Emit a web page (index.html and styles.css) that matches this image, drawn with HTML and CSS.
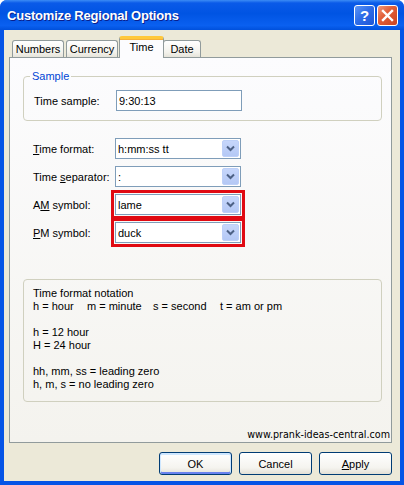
FILE: index.html
```html
<!DOCTYPE html>
<html lang="en">
<head>
    <meta charset="UTF-8">
    <meta name="viewport" content="width=device-width, initial-scale=1.0">
    <title>Customize Regional Options</title>
    <link rel="stylesheet" href="styles.css">
</head>
<body>
    <div class="window">
        <div class="titlebar">
            <span class="title">Customize Regional Options</span>
            <div class="caption-buttons">
                <button class="caption-btn help">?</button>
                <button class="caption-btn close">
                    <svg width="13" height="13" viewBox="0 0 13 13">
                        <path d="M2 2 L11 11 M11 2 L2 11" stroke="#fff" stroke-width="2.4" stroke-linecap="square"/>
                    </svg>
                </button>
            </div>
        </div>

        <div class="client">
            <div class="tabs">
                <div class="tab tab-numbers">Numbers</div>
                <div class="tab tab-currency">Currency</div>
                <div class="tab tab-time active">Time</div>
                <div class="tab tab-date">Date</div>
            </div>

            <div class="panel">
                <fieldset class="group sample">
                    <legend>Sample</legend>
                    <div class="field">
                        <label>Time sample:</label>
                        <div class="textbox">9:30:13</div>
                    </div>
                </fieldset>

                <div class="fields">
                    <div class="field">
                        <label><u>T</u>ime format:</label>
                        <div class="combo">
                            <span class="combo-value">h:mm:ss tt</span>
                            <span class="drop"><svg width="9" height="7" viewBox="0 0 9 7"><path d="M1 1.5 L4.5 5 L8 1.5" fill="none" stroke="#4d6185" stroke-width="2"/></svg></span>
                        </div>
                    </div>
                    <div class="field">
                        <label>Time <u>s</u>eparator:</label>
                        <div class="combo">
                            <span class="combo-value">:</span>
                            <span class="drop"><svg width="9" height="7" viewBox="0 0 9 7"><path d="M1 1.5 L4.5 5 L8 1.5" fill="none" stroke="#4d6185" stroke-width="2"/></svg></span>
                        </div>
                    </div>
                    <div class="field">
                        <label>A<u>M</u> symbol:</label>
                        <div class="combo marked">
                            <span class="combo-value">lame</span>
                            <span class="drop"><svg width="9" height="7" viewBox="0 0 9 7"><path d="M1 1.5 L4.5 5 L8 1.5" fill="none" stroke="#4d6185" stroke-width="2"/></svg></span>
                        </div>
                    </div>
                    <div class="field">
                        <label><u>P</u>M symbol:</label>
                        <div class="combo marked">
                            <span class="combo-value">duck</span>
                            <span class="drop"><svg width="9" height="7" viewBox="0 0 9 7"><path d="M1 1.5 L4.5 5 L8 1.5" fill="none" stroke="#4d6185" stroke-width="2"/></svg></span>
                        </div>
                    </div>
                </div>

                <div class="group notation">
                    <p>Time format notation</p>
                    <p class="spaced">
                        <span class="col col-h">h = hour</span><span class="col col-m">m = minute</span><span class="col col-s">s = second</span><span class="col">t = am or pm</span>
                    </p>
                    <p>h = 12 hour</p>
                    <p class="spaced">H = 24 hour</p>
                    <p>hh, mm, ss = leading zero</p>
                    <p>h, m, s = no leading zero</p>
                </div>

                <div class="credit">www.prank-ideas-central.com</div>
            </div>

            <div class="buttons">
                <button class="btn default">OK</button>
                <button class="btn">Cancel</button>
                <button class="btn"><u>A</u>pply</button>
            </div>
        </div>
    </div>
</body>
</html>
```

FILE: styles.css
```css
* {
    margin: 0;
    padding: 0;
    box-sizing: border-box;
}

body {
    width: 404px;
    height: 485px;
    overflow: hidden;
    background: #fff;
    font-family: "Liberation Sans", Arial, sans-serif;
    font-size: 11px;
    color: #000;
}

.window {
    width: 404px;
    height: 485px;
    display: flex;
    flex-direction: column;
    background: #0554e6;
    border-radius: 7px 7px 0 0;
    overflow: hidden;
}

/* title bar */
.titlebar {
    height: 30px;
    flex-shrink: 0;
    display: flex;
    align-items: center;
    justify-content: space-between;
    padding: 0 6px 0 7px;
    background: linear-gradient(#3c8cf5 0%, #0a5ae8 10%, #0054e3 45%, #0a60f0 85%, #0050dc 100%);
}

.title {
    color: #fff;
    font-weight: bold;
    font-size: 13px;
    text-shadow: 1px 1px 0 #0a1f8c;
    letter-spacing: -0.2px;
}

.caption-buttons {
    display: flex;
    gap: 2px;
    margin-top: 1px;
}

.caption-btn {
    width: 21px;
    height: 21px;
    border: 1px solid #fff;
    border-radius: 3px;
    display: flex;
    align-items: center;
    justify-content: center;
    color: #fff;
    font-family: "Liberation Sans", Arial, sans-serif;
    font-weight: bold;
    font-size: 15px;
}

.help {
    background: linear-gradient(135deg, #5d95f5 0%, #2f6ee9 45%, #1d55d6 100%);
}

.close {
    background: linear-gradient(135deg, #f09a7c 0%, #e2603a 40%, #c9431f 100%);
}

/* dialog body */
.client {
    flex: 1;
    margin: 0 4px 4px;
    display: flex;
    flex-direction: column;
    padding: 6px 8px 6px 5px;
    background: #ece9d8;
}

.tabs {
    height: 21px;
    display: flex;
    align-items: flex-end;
    padding-left: 3px;
}

.tab {
    height: 17px;
    padding: 0 5px;
    margin-right: 2px;
    border: 1px solid #919b9c;
    border-bottom: none;
    border-radius: 3px 3px 0 0;
    background: linear-gradient(#fff, #f3f2ec 70%, #e6e4da);
    display: flex;
    align-items: center;
    justify-content: center;
}

.tab-numbers { width: 52px; }
.tab-currency { width: 52px; margin-right: 0; }
.tab-date { width: 38px; }

.tab.active {
    width: 45px;
    height: 22px;
    margin: 0 -1px -1px 1px;
    padding-bottom: 3px;
    position: relative;
    z-index: 1;
    background: #fcfcfe;
    border-top: 3px solid #ffc83c;
    box-shadow: inset 0 1px 0 #f5b03a;
}

.panel {
    flex: 1;
    display: flex;
    flex-direction: column;
    padding: 12px 0 0 13px;
    border: 1px solid #919b9c;
    background: linear-gradient(#fcfcfe, #f4f3ee);
}

.group {
    border: 1px solid #d0d0bf;
    border-radius: 4px;
    margin-right: 9px;
}

.sample {
    padding: 7px 10px 9px;
}

.sample legend {
    padding: 0 2px;
    margin-left: -4px;
    line-height: 13px;
    color: #0046d5;
}

.field {
    display: flex;
    align-items: center;
}

.field label {
    width: 82px;
    flex-shrink: 0;
}

.textbox,
.combo {
    width: 126px;
    height: 21px;
    border: 1px solid #7f9db9;
    background: #fff;
    display: flex;
    align-items: center;
    padding-left: 2px;
}

.fields {
    margin-top: 17px;
    padding-left: 10px;
    display: flex;
    flex-direction: column;
    gap: 7px;
}

.combo {
    padding: 1px;
    padding-left: 2px;
    justify-content: space-between;
}

.combo.marked {
    outline: 3px solid #e00a12;
    outline-offset: 1px;
}

.drop {
    width: 17px;
    height: 17px;
    border-radius: 2px;
    background: linear-gradient(#c6d6fb, #b4c8f5);
    border: 1px solid #bdd0f8;
    display: flex;
    align-items: center;
    justify-content: center;
}

.notation {
    margin-top: 36px;
    padding: 7px 9px 10px;
    line-height: 13px;
}

.notation .spaced {
    margin-bottom: 13px;
}

.col {
    display: inline-block;
}

.col-h { width: 54px; }
.col-m { width: 66px; }
.col-s { width: 67px; }

.credit {
    margin-top: auto;
    margin-bottom: 1px;
    padding-right: 1px;
    text-align: right;
    font-family: "DejaVu Sans", Verdana, sans-serif;
    font-size: 9.6px;
    line-height: 12px;
}

/* dialog buttons */
.buttons {
    margin-top: 9px;
    display: flex;
    justify-content: flex-end;
    gap: 7px;
}

.btn {
    width: 73px;
    height: 23px;
    border: 1px solid #003c74;
    border-radius: 3px;
    background: linear-gradient(#fff, #f5f4ef 70%, #e3e0d6);
    font-family: "Liberation Sans", Arial, sans-serif;
    font-size: 11px;
    color: #000;
}

.btn.default {
    box-shadow: inset 0 1px 0 1px #cee7ff, inset 0 -1px 0 1px #6982ee;
}
```
